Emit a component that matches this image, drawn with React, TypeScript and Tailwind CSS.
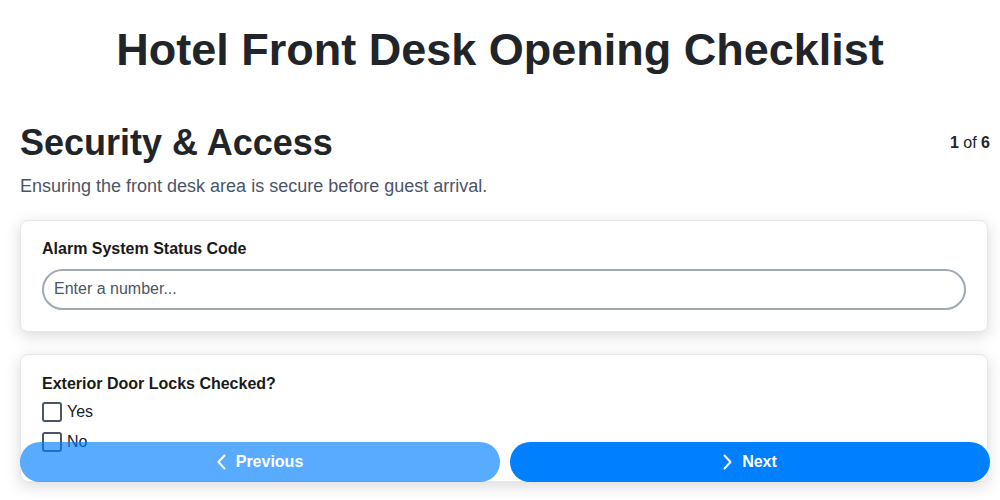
import { useState } from "react";

const font = { fontFamily: '"Liberation Sans", Arial, sans-serif' };

// chevron drawn by hand: thin, 7x14
const Chevron = ({ dir }: { dir: "left" | "right" }) => (
  <svg width="9" height="16" viewBox="0 0 9 16" fill="none" stroke="currentColor" strokeWidth="2" strokeLinecap="round" strokeLinejoin="round">
    {dir === "left" ? <polyline points="7.5,1.5 1.5,8 7.5,14.5" /> : <polyline points="1.5,1.5 7.5,8 1.5,14.5" />}
  </svg>
);

const CheckOption = ({ label }: { label: string }) => {
  const [checked, setChecked] = useState(false);
  return (
    <label className="flex h-6 items-center cursor-pointer">
      <input
        type="checkbox"
        checked={checked}
        onChange={() => setChecked(!checked)}
        className="appearance-none w-5 h-5 m-0 border-2 border-[#4a5568] rounded-[3px] bg-white"
      />
      <span className="ml-[5px] text-base leading-6 text-[#1a202c]">{label}</span>
    </label>
  );
};

export default function App() {
  const [code, setCode] = useState("");

  return (
    <div className="min-h-[500px] bg-white" style={font}>
      <h1 className="pt-6 text-center text-[45px] leading-[1.17] font-bold text-[#212529]">
        Hotel Front Desk Opening Checklist
      </h1>

      <div className="pl-5 pr-[10px]">
        <div className="mt-[46px] flex items-center justify-between">
          <h2 className="text-4xl leading-10 font-bold text-[#212529]">Security &amp; Access</h2>
          <p className="text-base leading-6 text-[#212529]">
            <span className="font-bold">1</span> of <span className="font-bold">6</span>
          </p>
        </div>
        <p className="mt-[9px] text-lg leading-7 text-[#4a5568]">
          Ensuring the front desk area is secure before guest arrival.
        </p>

        <div className="mt-5 mr-[2px] flex flex-col gap-[22px]">
          <div className="rounded-lg border border-[#e5e7eb] bg-white px-[21px] pt-4 pb-[21px] shadow-[0_4px_16px_rgba(0,0,0,0.15)]">
            <label className="block mb-2 text-base leading-6 font-bold text-[#1a1a1a]">Alarm System Status Code</label>
            <input
              type="number"
              value={code}
              onChange={(e) => setCode(e.target.value)}
              placeholder="Enter a number..."
              className="w-full h-[41px] rounded-full border-2 border-[#a0a8b4] bg-white px-[10px] text-base text-[#1a202c] placeholder:text-[#4a5568] outline-none"
            />
          </div>

          <div className="rounded-lg border border-[#e5e7eb] bg-white px-[21px] pt-[17px] pb-[27px] shadow-[0_4px_16px_rgba(0,0,0,0.15)]">
            <p className="mb-[4px] text-base leading-6 font-bold text-[#1a1a1a]">Exterior Door Locks Checked?</p>
            <div className="flex flex-col gap-[6px]">
              <CheckOption label="Yes" />
              <CheckOption label="No" />
            </div>
          </div>
        </div>
      </div>

      <div className="fixed bottom-[18px] left-5 right-[10px] grid grid-cols-2 gap-[10px]">
        <button className="flex h-10 items-center justify-center gap-[10px] rounded-full bg-[#007fff] text-base font-bold text-white opacity-65">
          <Chevron dir="left" />
          Previous
        </button>
        <button className="flex h-10 items-center justify-center gap-[10px] rounded-full bg-[#007fff] text-base font-bold text-white">
          <Chevron dir="right" />
          Next
        </button>
      </div>
    </div>
  );
}
